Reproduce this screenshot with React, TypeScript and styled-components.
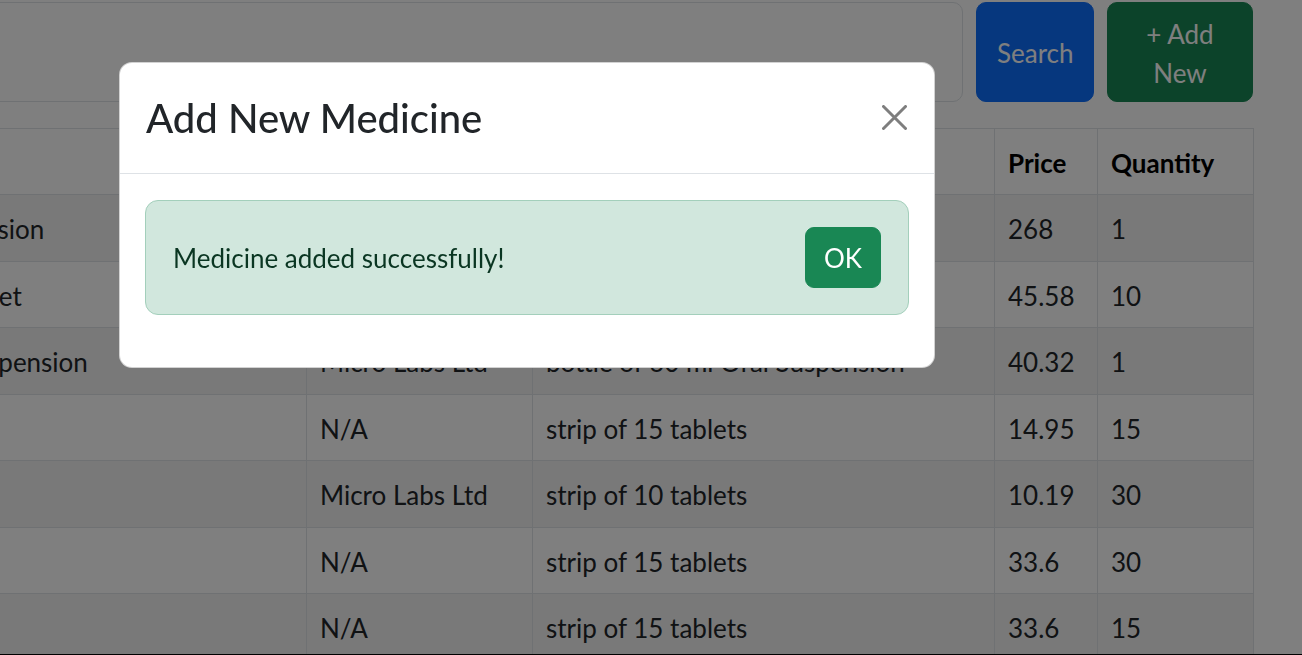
import React from "react";
import styled, { createGlobalStyle } from "styled-components";

const GlobalStyle = createGlobalStyle`
  html, body {
    margin: 0;
    overflow: hidden;
    background: #fff;
  }
  body {
    font-family: "Lato", "Noto Sans", sans-serif;
    font-size: 26px;
    line-height: 1.5;
    color: #212529;
  }
  * { box-sizing: border-box; }
`;

const Page = styled.div`
  width: 1703px;
  margin-left: -450px;
  padding-top: 2px;
`;

const Toolbar = styled.div`
  display: flex;
  gap: 13px;
  align-items: stretch;
`;

const SearchInput = styled.input`
  flex: 1;
  min-width: 0;
  font: inherit;
  color: #212529;
  background: #fff;
  border: 1px solid #dee2e6;
  border-radius: 10px;
  padding: 9.75px 19.5px;
`;

const ActionButton = styled.button<{ $tone: "primary" | "success"; $width?: number }>`
  font: inherit;
  line-height: 39px;
  color: #fff;
  background: ${(p) => (p.$tone === "primary" ? "#0d6efd" : "#198754")};
  border: 1px solid ${(p) => (p.$tone === "primary" ? "#0d6efd" : "#198754")};
  border-radius: 10px;
  padding: 11.75px 19.5px 7.75px;
  text-align: center;
  width: ${(p) => (p.$width ? `${p.$width}px` : "auto")};
  flex: none;
`;

const Table = styled.table`
  width: 100%;
  margin-top: 26.5px;
  border-collapse: collapse;
  table-layout: fixed;
  border: 1px solid #dee2e6;
`;

const HeadCell = styled.th`
  text-align: left;
  font-weight: 700;
  color: #000;
  padding: 15px 13px 11px;
  line-height: 39px;
  border: 1px solid #dee2e6;
  white-space: nowrap;
  overflow: hidden;
`;

const BodyRow = styled.tr`
  &:nth-child(odd) {
    background: rgba(0, 0, 0, 0.05);
  }
`;

const Cell = styled.td`
  padding: 15px 13px 11px;
  line-height: 39.5px;
  border: 1px solid #dee2e6;
  white-space: nowrap;
  overflow: hidden;
  color: #212529;
`;

const Backdrop = styled.div`
  position: fixed;
  inset: 0;
  background: rgba(0, 0, 0, 0.5);
  border-bottom: 1px solid #000;
  padding: 62px 0 0 119px;
`;

const Dialog = styled.div`
  width: 816px;
  background: #fff;
  border: 1px solid rgba(0, 0, 0, 0.175);
  border-radius: 13px;
`;

const DialogHeader = styled.div`
  display: flex;
  align-items: center;
  justify-content: space-between;
  padding: 30px 27px 32px 26px;
  border-bottom: 1px solid #dee2e6;
`;

const DialogTitle = styled.h5`
  margin: 0;
  padding-top: 2px;
  font-size: 40px;
  font-weight: 500;
  line-height: 46px;
  color: #212529;
`;

const CloseButton = styled.button`
  display: flex;
  padding: 0;
  background: transparent;
  border: 0;
  opacity: 0.5;
  cursor: pointer;
`;

const DialogBody = styled.div`
  padding: 26px 25px;
`;

const Alert = styled.div`
  display: flex;
  align-items: center;
  justify-content: space-between;
  padding: 26px 27px 26px 27px;
  margin-bottom: 26px;
  color: #0a3622;
  background: #d1e7dd;
  border: 1px solid #a3cfbb;
  border-radius: 13px;
`;

const AlertText = styled.span`
  line-height: 39px;
  padding-top: 3px;
`;

const OkButton = styled.button`
  font: inherit;
  line-height: 39px;
  color: #fff;
  background: #198754;
  border: 1px solid #198754;
  border-radius: 9px;
  padding: 10.75px 18px 8.75px;
`;

type Row = [string, string, string, string, string];

const rows: Row[] = [
  ["Augmentin 400mg/57mg Oral Suspension", "Abbott", "bottle of 30 ml Oral Suspension", "268", "1"],
  ["Telma 40 Telmisartan Film Coated Tablet", "N/A", "strip of 15 tablets", "45.58", "10"],
  ["Calpol 250mg/5ml Paediatric Oral Suspension", "Micro Labs Ltd", "bottle of 60 ml Oral Suspension", "40.32", "1"],
  ["Azee 500 Tablet", "N/A", "strip of 15 tablets", "14.95", "15"],
  ["Dolo 650 Tablet", "Micro Labs Ltd", "strip of 10 tablets", "10.19", "30"],
  ["Allegra 120mg Tablet", "N/A", "strip of 15 tablets", "33.6", "30"],
  ["Ciplox 500 Tablet", "N/A", "strip of 15 tablets", "33.6", "15"],
  ["Zincovit Tablet", "N/A", "strip of 15 tablets", "98", "20"],
];

const colWidths = [756, 226, 462, 103, 156];

export default function App() {
  return (
    <>
      <GlobalStyle />
      <Page>
        <Toolbar>
          <SearchInput type="text" aria-label="Search medicines" />
          <ActionButton $tone="primary">Search</ActionButton>
          <ActionButton $tone="success" $width={146}>
            + Add New
          </ActionButton>
        </Toolbar>
        <Table>
          <colgroup>
            {colWidths.map((w, i) => (
              <col key={i} style={{ width: w }} />
            ))}
          </colgroup>
          <thead>
            <tr>
              <HeadCell>Name</HeadCell>
              <HeadCell>Manufacturer</HeadCell>
              <HeadCell>Pack Size</HeadCell>
              <HeadCell>Price</HeadCell>
              <HeadCell>Quantity</HeadCell>
            </tr>
          </thead>
          <tbody>
            {rows.map((r, i) => (
              <BodyRow key={i}>
                {r.map((c, j) => (
                  <Cell key={j}>{c}</Cell>
                ))}
              </BodyRow>
            ))}
          </tbody>
        </Table>
      </Page>
      <Backdrop>
        <Dialog role="dialog" aria-modal="true">
          <DialogHeader>
            <DialogTitle>Add New Medicine</DialogTitle>
            <CloseButton aria-label="Close">
              <svg width="25" height="25" viewBox="0 0 25 25" fill="none">
                <path d="M1.5 1.5 L23.5 23.5 M23.5 1.5 L1.5 23.5" stroke="#000" strokeWidth="3" strokeLinecap="round" />
              </svg>
            </CloseButton>
          </DialogHeader>
          <DialogBody>
            <Alert>
              <AlertText>Medicine added successfully!</AlertText>
              <OkButton>OK</OkButton>
            </Alert>
          </DialogBody>
        </Dialog>
      </Backdrop>
    </>
  );
}
